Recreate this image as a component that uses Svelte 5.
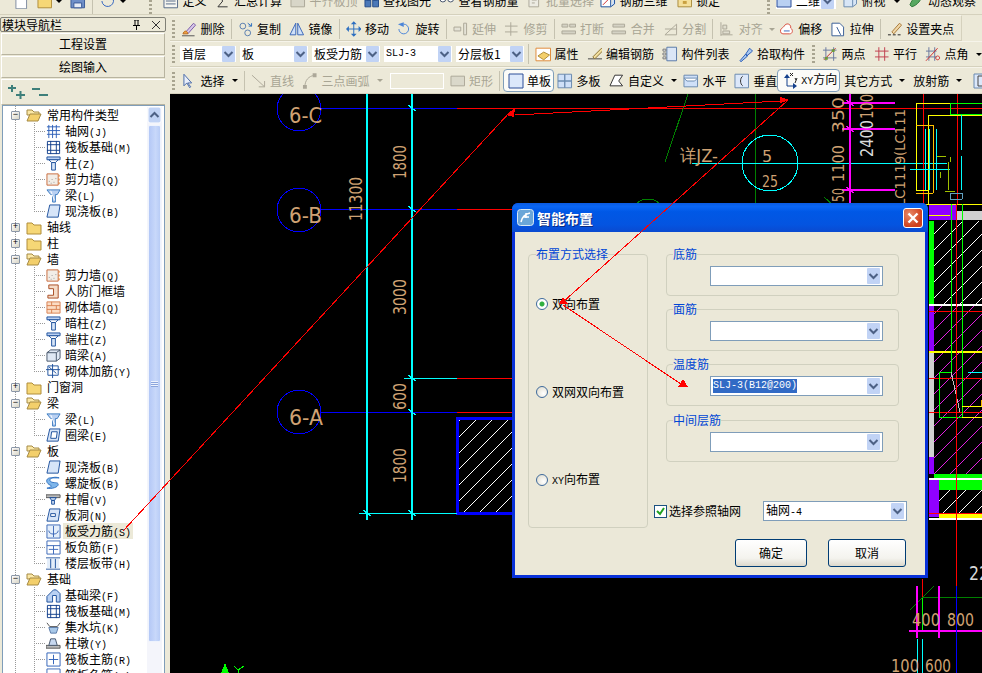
<script>
  const blue = '#1c4f9c';
  const sky = '#b9d0f2';
  const gray = '#aca899';
  const brick = '#c8693a';

  // each icon: list of [path, fill, stroke]
  const icons = {
    doc: [['M3 0h8l3 3v13H3z', '#fff', '#7f8ca0']],
    folder: [['M1 4h5l2 2h7v9H1z', '#f6d776', '#b08d3a']],
    folderOpen: [['M1 3h5l2 2h5v3H1z', '#fbe8a6', '#a58a45'], ['M1 14l3-7h11l-3 7z', '#f3cf6b', '#a58a45']],
    save: [['M1 1h14v14H1z', '#6f8fc8', '#3a5a98'], ['M4 1h8v5H4zM4 10h8v5H4z', '#e6ecf6', '#3a5a98']],
    undo: [['M3 8a6 6 0 1 0 4-6', 'none', '#2f62c0'], ['M1 3l6-2v6z', '#2f62c0', 'none']],
    def: [['M1 1h14v14H1z', '#f5f5f0', '#566a88'], ['M3 5h10M3 8h10M3 11h10', 'none', '#566a88']],
    sigma: [['M13 2H3l5 6-5 6h10', 'none', '#333']],
    flat: [['M1 5h14v9H1z', '#d8d6c8', gray], ['M3 1h10v4H3z', '#e6e4d8', gray]],
    find: [['M1 7h6v7H1zM9 7h6v7H9z', '#4a78b8', '#234a88'], ['M3 2h3v5H3zM10 2h3v5h-3z', '#8fb0dc', '#234a88']],
    glasses: [['M1 6a3 3 0 1 0 6 0a3 3 0 1 0-6 0M9 6a3 3 0 1 0 6 0a3 3 0 1 0-6 0M7 6h2', '#fff', '#44546a']],
    batch: [['M2 1h10v13H2z', '#ecebe2', gray], ['M5 4h5M5 7h5M5 10h3', 'none', gray]],
    cube: [['M1 4h10v10H1z', '#fff', blue], ['M1 4l4-3h10l-4 3M11 14l4-3V1', '#cfe0f8', blue], ['M3 12l6-6', 'none', '#d03030']],
    lock: [['M1 5h14v9H1z', '#f4df9a', '#a88b3c'], ['M6 8h4v3H6z', '#c8a040', 'none']],
    view: [['M2 4l4-3h9v10l-4 3H2z', '#d8e6f6', '#6a8ab0'], ['M2 4h9v10M11 4l4-3', 'none', '#6a8ab0']],
    orbit: [['M2 12c3-8 8-10 12-10c0 5-4 10-10 12z', '#58a860', '#2f7a3a'], ['M10 3l4-2v4z', '#e08a3a', 'none']],
    erase: [['M1 15h13', 'none', '#555'], ['M5 11l8-9 2 2-8 9z', '#d8c8e8', '#7a5aa8'], ['M3 11c2-2 4 0 4 2H2z', '#f0a040', '#b86a20']],
    copy: [['M2 5a3 3 0 1 0 6 0a3 3 0 1 0-6 0M7 12a3 3 0 1 0 6 0a3 3 0 1 0-6 0', 'none', '#5b7fb0'], ['M10 2l4 3M14 2v3h-3', 'none', '#2d6fc0']],
    mirror: [['M7 2L1 14h6zM9 2l6 12H9z', '#cfe0f8', '#3a66b8']],
    move: [['M8 1v14M1 8h14', 'none', '#2d6fc0'], ['M8 0l3 3H5zM8 16l3-3H5zM0 8l3-3v6zM16 8l-3-3v6z', '#2d6fc0', 'none']],
    rotate: [['M3 8a5 5 0 1 0 5-5', 'none', '#4b85d8'], ['M2 3l6-2v5z', '#4b85d8', 'none']],
    extend: [['M1 6h7v4H1zM11 2h3v12h-3z', '#e4e2d6', gray]],
    trim: [['M1 5h13M1 11h13M7 1v14', 'none', gray]],
    breakI: [['M1 3h6v3H1zM9 3h6v3H9zM1 10h14v3H1z', '#d4d2c4', gray]],
    merge: [['M2 3h12v3H2zM1 10h14v3H1z', '#d4d2c4', gray]],
    split: [['M2 14L14 3M2 14h12V3M2 8h12', 'none', gray]],
    align: [['M2 1v14M2 14h12', 'none', gray], ['M4 4h4v4H4zM4 10h7v3H4z', '#e0decf', gray]],
    offset: [['M2 12c-2-5 3-5 4-8c3-3 7 0 6 3c3 2 2 6-1 6H4z', '#fff', '#d85040'], ['M5 10h6', 'none', '#3a66b8']],
    stretch: [['M2 2h8l4 4v9H2z', '#fff', '#3a5f98'], ['M7 6l4 8', 'none', '#3a5f98']],
    grip: [['M1 14h3M6 14h3M11 14h3', 'none', '#222'], ['M5 11l8-9 2 2-8 9z', '#f0d8a8', '#a87838']],
    prop: [['M1 2h15v13H1z', '#fff', '#e08a3a'], ['M3 10l6-4 6 3-6 5z', '#f3cf6b', '#b08d3a']],
    edit: [['M1 13h17', 'none', '#444'], ['M6 11L15 2l2 2-9 9z', '#f3e0a0', '#8a7030']],
    list: [['M5 1h10v14H5z', '#dbe6f6', '#5a7aa8'], ['M1 3h3v2H1zM1 7h3v2H1zM1 11h3v2H1z', '#fff', '#777']],
    pick: [['M2 15l6-7 2 2-7 6zM8 8l4-6 3 3-6 5z', '#a8c8f0', '#2d5fb8']],
    twoPts: [['M1 4h14M1 12h14M4 1v14M12 1v14', 'none', '#6a7aa0'], ['M2 14L14 2', 'none', '#c03030'], ['M3 11h3v3H3zM10 3h3v3h-3z', '#6f9a3a', 'none']],
    parallel: [['M1 5h14M1 11h14M5 1v14M11 1v14', 'none', '#c04050']],
    angle: [['M1 5h11M1 11h11M4 1v14M10 1v14', 'none', '#6a7aa0'], ['M1 15L13 2', 'none', '#d03030'], ['M13 10a2 2 0 1 0 .1 0', 'none', '#d03030']],
    cursor: [['M3 1v12l3-3 3 5 1-1-3-4h4z', '#e8eefa', '#4a6aa8']],
    lineI: [['M1 2l13 12M14 8v6H8', 'none', gray]],
    arc: [['M3 14C3 7 7 3 13 2', 'none', gray], ['M1 12h4v4H1zM11 0h4v4h-4z', gray, 'none']],
    rect: [['M1 3h14v10H1z', '#dad8ca', gray]],
    single: [['M1 1h14v14H1z', '#dce8fa', '#2d4f98']],
    multi: [['M1 1h7v7H1zM8 1h7v7H8zM1 8h7v7H1zM8 8h7v7H8z', '#cfe0f8', '#6a8ab0']],
    custom: [['M1 13L6 2h8l-4 6 4 5z', '#fff', '#333']],
    horiz: [['M1 2h14v12H1z', '#cfe0f8', '#6a8ab0'], ['M1 5h14l-3 3H4z', '#fff', '#6a8ab0']],
    vert: [['M1 1h14v14H1z', '#dce8fa', '#6a8ab0'], ['M9 3C6 5 6 11 9 13', 'none', '#333']],
    xy: [['M5 4v9h7', 'none', '#14408c'], ['M5 1l3 4H2zM15 13l-4-3v6z', '#14408c', 'none'], ['M8 0l3 3M11 0L8 3M13 5l1 2M15 5l-2 5', 'none', '#222']],
    radial: [['M1 1h14v14H1z', '#dce8fa', '#6a8ab0'], ['M5 3v10M5 3h4M5 13h4', 'none', '#444']],
    wall: [['M1 2h12v12H1z', '#f2ede6', brick], ['M3 10h1M6 8h1M8 11h1M10 7h1M5 12h1', 'none', '#999'], ['M14 3v2M14 7v2M14 11v2', 'none', '#e07820']],
    col: [['M1 1h14v3H1z', sky, blue], ['M3 4h10l-3 3H6z', '#fff', blue], ['M6 7h4v8H6z', '#d7e5f8', blue]],
    beam: [['M1 2h14l-3 5h-2v8H7V7H5z', sky, '#3a7ac0'], ['M5 3l4 10', 'none', '#fff']],
    slab: [['M4 1h11l-2 13H1z', '#d7e5f8', blue]],
    door: [['M3 1h10v14H2v-3h6V5H3z', '#f5dcc8', '#a84a20']],
    brick: [['M1 2h14v12H1z', '#fbdcc4', '#d88050'], ['M1 6h14M1 10h14M6 2v4M11 6v4M6 10v4', 'none', '#d88050']],
    darkBeam: [['M1 5l4-3h10v9l-4 3H1z', '#dfe8f4', '#44546a'], ['M1 5h10v9M11 5l4-3', 'none', '#44546a']],
    rebar: [['M2 2h11v10H2z', '#fff', blue], ['M0 6h15M7 0v15M3 3l8 7', 'none', blue]],
    ring: [['M4 1h11l-2 13H1z', '#d7e5f8', blue], ['M6 4h6l-1 7H5z', '#fff', blue]],
    spiral: [['M14 2C8 0 2 3 5 6c3 2 8 0 8 3s-7 5-12 4c4-1 6-2 4-3C0 8-1 3 4 2z', '#7fb6ea', '#2d6fc0']],
    cap: [['M0 3h15v3H0z', '#bbb', '#555'], ['M4 6h7l-2 3H6zM6 9h3v4H6z', '#c7d8f0', blue]],
    hole: [['M4 1h11l-2 13H1z', '#d7e5f8', blue], ['M5 6h5v3H5z', '#fff', blue]],
    force: [['M1 1h14v14H1z', '#e4eefa', '#3a66b8'], ['M8 2v12M3 7c0 5 10 5 10 0', 'none', '#3a66b8']],
    neg: [['M1 1h14v14H1z', '#fff', '#3a66b8'], ['M1 6h14M8 6v9M3 10h10', 'none', '#3a66b8']],
    band: [['M0 2h15M0 14h15', 'none', blue], ['M1 3h13v10H1z', '#e4eefa', 'none'], ['M5 3v10M10 3v10', 'none', blue]],
    fbeam: [['M1 15V9l7-7h3l4 4v9h-4V8H7v7z', sky, blue]],
    raft: [['M1.5 1.5h13v13h-13z', '#fff', '#123f8c'], ['M1 5h14M1 11h14M5 1v14M11 1v14', 'none', '#123f8c']],
    axisnet: [['M1 3h14M1 7h14M1 11h14M3 1v14M7 1v14M11 1v14', 'none', '#2d5fb8']],
    pit: [['M1 3l3 4h8l3-4', 'none', '#555'], ['M3 8h10l-2 6H5z', '#a8c8e8', '#5a7aa8']],
    pier: [['M0 10h15v3H0z', '#bbb', '#555'], ['M5 3h5l2 7H3z', '#c7d8f0', '#44546a']],
    main: [['M1 1h14v14H1z', '#fff', '#2d5fb8'], ['M8 3v10M3 8h10', 'none', '#2d5fb8']]
  };

  const top = [
    { space: 9 }, { icon: 'doc' }, { icon: 'folder' }, { caret: 1 }, { space: 4 }, { icon: 'save' },
    { sep: 1 }, { icon: 'undo' }, { space: 2 }, { caret: 1 }, { space: 23 }, { grip: 1 }, { space: 7 },
    { icon: 'def', label: '定义' }, { icon: 'sigma', label: '汇总计算' },
    { icon: 'flat', label: '平齐板顶', off: 1 }, { icon: 'find', label: '查找图元', nudge: -2 },
    { icon: 'glasses', label: '查看钢筋量' }, { icon: 'batch', label: '批量选择', off: 1 },
    { icon: 'cube', label: '钢筋三维', nudge: -2 }, { icon: 'lock', label: '锁定', nudge: 1 }
  ];

  const edit = [
    { icon: 'erase', label: '删除' }, { sep: 1 },
    { icon: 'copy', label: '复制' }, { icon: 'mirror', label: '镜像' }, { sep: 1 },
    { icon: 'move', label: '移动' }, { icon: 'rotate', label: '旋转', nudge: -1 }, { sep: 1 },
    { icon: 'extend', label: '延伸', off: 1 }, { icon: 'trim', label: '修剪', off: 1 }, { sep: 1 },
    { icon: 'breakI', label: '打断', off: 1 }, { icon: 'merge', label: '合并', off: 1, nudge: -1 }, { icon: 'split', label: '分割', off: 1 }, { sep: 1 },
    { icon: 'align', label: '对齐', off: 1, caret: 1 },
    { icon: 'offset', label: '偏移' }, { icon: 'stretch', label: '拉伸' }, { sep: 1 },
    { icon: 'grip', label: '设置夹点' }
  ];

  const props = [
    { icon: 'prop', label: '属性' }, { icon: 'edit', label: '编辑钢筋' },
    { icon: 'list', label: '构件列表' }, { icon: 'pick', label: '拾取构件' }, { grip: 1 },
    { icon: 'twoPts', label: '两点' }, { icon: 'parallel', label: '平行' }, { icon: 'angle', label: '点角', caret: 1 }
  ];

  const drawA = [
    { icon: 'cursor', label: '选择', caret: 1 }, { sep: 1 },
    { icon: 'lineI', label: '直线', off: 1 }, { icon: 'arc', label: '三点画弧', off: 1, caret: 1 }
  ];

  const drawB = [
    { icon: 'multi', label: '多板' }, { icon: 'custom', label: '自定义', caret: 1 },
    { icon: 'horiz', label: '水平', nudge: -2 }, { icon: 'vert', label: '垂直', nudge: -1 }
  ];

  const combos = [
    { text: '首层', w: 56 }, { text: '板', w: 68 }, { text: '板受力筋', w: 68 },
    { text: 'SLJ-3', w: 68, lat: 1 }, { text: '分层板1', w: 68 }
  ];

  const tree = [
    { folder: '常用构件类型', open: 1, kids: [['axisnet', '轴网', 'J'], ['raft', '筏板基础', 'M'], ['col', '柱', 'Z'], ['wall', '剪力墙', 'Q'], ['beam', '梁', 'L'], ['slab', '现浇板', 'B']] },
    { folder: '轴线' },
    { folder: '柱' },
    { folder: '墙', open: 1, kids: [['wall', '剪力墙', 'Q'], ['door', '人防门框墙', ''], ['brick', '砌体墙', 'Q'], ['col', '暗柱', 'Z'], ['col', '端柱', 'Z'], ['darkBeam', '暗梁', 'A'], ['rebar', '砌体加筋', 'Y']] },
    { folder: '门窗洞' },
    { folder: '梁', open: 1, kids: [['beam', '梁', 'L'], ['ring', '圈梁', 'E']] },
    { folder: '板', open: 1, kids: [['slab', '现浇板', 'B'], ['spiral', '螺旋板', 'B'], ['cap', '柱帽', 'V'], ['hole', '板洞', 'N'], ['force', '板受力筋', 'S', 1], ['neg', '板负筋', 'F'], ['band', '楼层板带', 'H']] },
    { folder: '基础', open: 1, kids: [['fbeam', '基础梁', 'F'], ['raft', '筏板基础', 'M'], ['pit', '集水坑', 'K'], ['pier', '柱墩', 'Y'], ['main', '筏板主筋', 'R'], ['neg', '筏板负筋', 'X']] }
  ];

  const bars = [
    { label: '底筋', value: '' },
    { label: '面筋', value: '' },
    { label: '温度筋', value: 'SLJ-3(B12@200)' },
    { label: '中间层筋', value: '' }
  ];

  const modes = [
    { cjk: '双向布置', on: true },
    { cjk: '双网双向布置' },
    { lat: 'XY', cjk: '向布置' }
  ];

  const C = '#00ffff', R = '#ff0000', G = '#00ff00', DG = '#008000', M = '#ff00ff', Y = '#ffff00', BL = '#0000ff', P = '#9000ff', W = '#ffffff', O = '#ffc000';
  const lines = [
    [321, 108, 457, 108, BL], [321, 209, 457, 209, BL], [321, 412, 457, 412, BL],
    [457, 108, 982, 108, R], [457, 209, 515, 209, R], [457, 378, 515, 378, R], [457, 412, 515, 412, R],
    [404, 378, 457, 378, C], [359, 513, 457, 513, C],
    [367, 94, 367, 520, C, 2], [412, 94, 412, 520, C, 2],
    [408, 105, 416, 111, C], [408, 206, 416, 212, C], [408, 375, 416, 381, C], [408, 409, 416, 415, C], [408, 510, 416, 516, C], [363, 510, 371, 516, C],
    [688, 94, 665, 162, DG], [755, 94, 755, 205, DG], [824, 197, 833, 205, DG],
    [692, 163, 947, 163, C],
    [850, 94, 850, 205, M, 2], [842, 103, 895, 103, M, 2], [842, 129, 895, 129, M, 2], [842, 190, 895, 190, M, 2], [846, 100, 854, 106, M], [846, 126, 854, 132, M], [846, 187, 854, 193, M],
    [923, 94, 923, 205, R], [957, 94, 957, 205, R],
    [916, 103, 916, 190, Y], [916, 103, 982, 103, Y], [928, 115, 928, 204, Y], [928, 115, 982, 115, Y], [916, 190, 928, 190, Y],
    [950, 103, 950, 115, G], [950, 103, 982, 103, G], [950, 114, 982, 114, G],
    [916, 125, 933, 125, O], [933, 125, 933, 193, O], [916, 193, 933, 193, O],
    [925, 129, 925, 190, C], [929, 129, 929, 190, C], [936, 129, 936, 190, C], [961, 115, 961, 150, C], [961, 156, 961, 190, C], [910, 169, 950, 169, C],
    [937, 156, 946, 156, '#a0c000'], [950, 157, 950, 162, '#a0c000'], [940, 172, 940, 178, '#a0c000'], [948, 162, 948, 190, '#a0c000'], [945, 191, 955, 191, '#a0c000'],
    [950, 193, 962, 193, '#60a0c0'], [950, 199, 962, 199, '#60a0c0'], [950, 193, 950, 199, '#60a0c0'], [962, 193, 962, 199, '#60a0c0'],
    [922, 579, 922, 597, R], [922, 597, 922, 631, G], [922, 597, 982, 597, DG], [910, 610, 934, 586, DG],
    [917, 586, 917, 638, M, 2], [939, 586, 939, 638, M, 2], [909, 631, 982, 631, M, 2],
    [917, 639, 917, 673, C], [922, 639, 922, 673, C], [956, 586, 956, 673, BL],
    [924, 204, 982, 204, Y], [929, 215, 950, 215, Y],
    [238, 673, 238, 670, G], [238, 670, 234, 666, G], [238, 670, 244, 666, G]
  ];

  // right of the dialog
  const fills = [
    [929, 205, 28, 15, P], [957, 211, 25, 9, '#d0d0d0'],
    [929, 221, 5, 83, G], [929, 306, 5, 45, P], [929, 353, 5, 104, '#d0d0d0'], [929, 457, 5, 17, P],
    [934, 474, 48, 4, G], [929, 304, 53, 2, W], [929, 351, 53, 2, Y], [929, 478, 53, 2, W],
    [929, 480, 10, 37, P], [939, 480, 43, 10, G], [939, 514, 43, 4, Y], [929, 518, 53, 2, W]
  ];
  const linesRight = [
    [929, 311, 982, 311, R], [929, 378, 982, 378, R], [929, 412, 982, 412, R], [929, 513, 982, 513, R],
    [951, 204, 951, 372, G], [962, 204, 962, 417, G], [939, 372, 951, 372, G], [939, 372, 939, 417, G], [939, 417, 962, 417, G],
    [951, 372, 960, 412, '#c0c0c0'], [962, 406, 982, 406, Y], [962, 417, 982, 417, Y], [981, 400, 981, 406, O], [968, 372, 982, 372, C],
    [956, 204, 956, 586, R]
  ];

  const texts = [
    { t: '6-C', x: 289, y: 123, len: 33 }, { t: '6-B', x: 289, y: 223, len: 33 }, { t: '6-A', x: 289, y: 425, len: 34 },
    { t: '详JZ-', x: 680, y: 162, len: 38, s: 18 }, { t: '5', x: 762, y: 162, s: 16 }, { t: '25', x: 762, y: 187, len: 16, s: 16 },
    { t: '400', x: 912, y: 626, len: 28, s: 17 }, { t: '800', x: 947, y: 626, len: 27, s: 17 },
    { t: '100', x: 891, y: 672, len: 28, s: 17 }, { t: '600', x: 925, y: 672, len: 26, s: 17 },
    { t: '22', x: 969, y: 580, len: 20, s: 20, c: '#d8d8d8' }
  ];
  // rotated dimension labels: bottom centre of the baseline
  const vtexts = [
    { t: '1800', x: 406, y: 179, len: 34 }, { t: '11300', x: 362, y: 221, len: 44 },
    { t: '3000', x: 406, y: 315, len: 36 }, { t: '600', x: 406, y: 410, len: 27 }, { t: '1800', x: 406, y: 483, len: 35 },
    { t: '350', x: 844, y: 133, len: 36, s: 15 }, { t: '1100', x: 844, y: 182, len: 37, s: 15 }, { t: '50', x: 844, y: 202, len: 14, s: 15 },
    { t: '2400', x: 873, y: 157, len: 37, c: '#d8d8d8' }, { t: '100', x: 873, y: 119, len: 25 },
    { t: 'LC1119(LC111', x: 905, y: 206, len: 97, s: 14 }
  ];
</script>

{#snippet icon(name, size = 16)}
  <svg class="icon" width={size} height={size} viewBox="0 0 16 16">
    {#each icons[name] as [d, fill, stroke]}
      <path {d} {fill} {stroke} />
    {/each}
  </svg>
{/snippet}

{#snippet tool(it)}
  {#if it.sep}
    <i class="sep"></i>
  {:else if it.grip}
    <i class="grip"></i>
  {:else if it.space}
    <i style="width: {it.space}px"></i>
  {:else if it.caret && !it.label}
    <i class="caret solo"></i>
  {:else}
    <span class="tool" class:off={it.off} style="margin-left: {it.nudge || 0}px">
      {@render icon(it.icon)}
      {#if it.label}<span class="txt">{it.label}</span>{/if}
      {#if it.caret}<i class="caret"></i>{/if}
    </span>
  {/if}
{/snippet}

{#snippet arrow()}
  <svg width="15" height="16" viewBox="0 0 15 16" class="arrow">
    <rect width="13" height="16" x="1" rx="1" fill="#c1d3f5" />
    <path d="M3.5 6l4 4 4-4" fill="none" stroke="#4d6185" stroke-width="2" />
  </svg>
{/snippet}

<div class="app">
  <div class="topbar">
    {#each top as it}{@render tool(it)}{/each}
    <span class="fill"></span>
    <i class="grip"></i>
    <span class="viewcombo">
      <svg class="icon" width="16" height="14" viewBox="0 0 16 14"><path d="M1 0h14v13H1z" fill="#b9d0f2" stroke="#2d4f98" /></svg>
      <span class="txt">二维</span>
      {@render arrow()}
    </span>
    <span class="tool">{@render icon('view')}<span class="txt">俯视</span><i class="caret"></i></span>
    <span class="tool">{@render icon('orbit')}<span class="txt">动态观察</span></span>
  </div>

  <div class="work">
    <aside class="nav">
      <div class="navtitle">
        <span>模块导航栏</span>
        <span class="navctl">
          <svg width="9" height="10" viewBox="0 0 9 10"><path d="M2 0h5M3 0v5M6 0v5M1 5.500h7M4.500 6v4" fill="none" stroke="#000" /></svg>
          <svg width="8" height="8" viewBox="0 0 8 8"><path d="M0 0l8 8M8 0L0 8" stroke="#333" /></svg>
        </span>
      </div>
      <button class="navbtn">工程设置</button>
      <button class="navbtn">绘图输入</button>
      <div class="navtools">
        <svg width="17" height="14" viewBox="0 0 17 14"><path d="M0 3h8M4 0v7M8 10h9M12.500 6v8" fill="none" stroke="#3e7f7a" stroke-width="2" /></svg>
        <svg width="16" height="8" viewBox="0 0 16 8"><path d="M0 1h8M7 7h9" fill="none" stroke="#3e7f7a" stroke-width="2" /></svg>
      </div>
      <div class="treebox">
        <div class="tree">
          {#each tree as f}
            <div class="row">
              <span class="exp">{f.open ? '−' : '+'}</span>
              {@render icon(f.open ? 'folderOpen' : 'folder')}
              <span class="fname">{f.folder}</span>
            </div>
            {#if f.kids}
              {#each f.kids as [ic, name, key, sel], i}
                <div class="row kid">
                  <span class="branch" class:last={i === f.kids.length - 1}></span>
                  {@render icon(ic, 15)}
                  <span class="kname" class:sel>{name}{#if key}<span class="lat"> ({key})</span>{/if}</span>
                </div>
              {/each}
            {/if}
          {/each}
        </div>
        <div class="scroll">
          <svg width="15" height="16" viewBox="0 0 15 16"><rect x="1" width="13" height="16" rx="2" fill="#c1d3f5" stroke="#fff" /><path d="M3.500 10l4-4 4 4" fill="none" stroke="#4d6185" stroke-width="2" /></svg>
          <div class="thumb"><i></i></div>
        </div>
      </div>
    </aside>

    <div class="main">
      <div class="bar edit">
        <i class="grip"></i>
        {#each edit as it}{@render tool(it)}{/each}
      </div>
      <div class="bar props">
        <i class="grip"></i>
        <div class="combos">
          {#each combos as c}
            <span class="combo" style="width: {c.w}px"><span class:lat={c.lat}>{c.text}</span>{@render arrow()}</span>
          {/each}
        </div>
        <i class="sep"></i>
        {#each props as it}{@render tool(it)}{/each}
      </div>
      <div class="bar draw">
        <i class="grip"></i>
        {#each drawA as it}{@render tool(it)}{/each}
        <span class="combo dead"></span>
        {@render tool({ icon: 'rect', label: '矩形', off: 1 })}
        <i class="sep"></i>
        <span class="toggle">{@render icon('single')}<span class="txt">单板</span></span>
        {#each drawB as it}{@render tool(it)}{/each}
        <span class="toggle xydir">{@render icon('xy')}<span class="txt"><span class="lat">XY</span>方向</span></span>
        <span class="tool"><span class="txt">其它方式</span><i class="caret"></i></span>
        <span class="tool"><span class="txt">放射筋</span><i class="caret"></i></span>
        <span class="tail">{@render icon('radial')}</span>
      </div>

      <svg class="cad" viewBox="170 94 812 579" width="812" height="579" shape-rendering="crispEdges">
        <defs>
          <pattern id="hw" width="16" height="16" patternUnits="userSpaceOnUse"><path d="M0 16L16 0" stroke="#fff" /></pattern>
          <pattern id="hm" width="16" height="16" patternUnits="userSpaceOnUse"><path d="M0 16L16 0" stroke="#e020e0" /></pattern>
        </defs>
        <rect x="170" y="94" width="812" height="579" fill="#000" />
        <rect x="458" y="419" width="60" height="93" fill="url(#hw)" />
        <rect x="457.500" y="418" width="60" height="95" fill="none" stroke={BL} stroke-width="3" />
        <rect x="934" y="221" width="48" height="83" fill="url(#hw)" />
        <rect x="934" y="306" width="48" height="168" fill="url(#hm)" />
        <rect x="939" y="490" width="43" height="24" fill="url(#hw)" />
        {#each fills as [x, y, width, height, fill]}
          <rect {x} {y} {width} {height} {fill} />
        {/each}
        {#each [...lines, ...linesRight] as [x1, y1, x2, y2, stroke, w]}
          <line {x1} {y1} {x2} {y2} {stroke} stroke-width={w || 1} />
        {/each}
        <circle cx="299" cy="109" r="22" fill="none" stroke={BL} />
        <circle cx="299" cy="210" r="22" fill="none" stroke={BL} />
        <circle cx="299" cy="412" r="22" fill="none" stroke={BL} />
        <circle cx="770" cy="163" r="28" fill="none" stroke={C} />
        <circle cx="648" cy="216" r="17" fill="none" stroke={DG} />
        <path d="M225 663l4 10h-8z" fill="#00ff00" />
        {#each texts as t}
          <text class="dim" x={t.x} y={t.y} font-size={t.s || 21} fill={t.c || '#cfa273'} textLength={t.len} lengthAdjust="spacingAndGlyphs">{t.t}</text>
        {/each}
        {#each vtexts as t}
          <text class="dim" transform="translate({t.x} {t.y}) rotate(-90)" font-size={t.s || 17} fill={t.c || '#cfa273'} textLength={t.len} lengthAdjust="spacingAndGlyphs">{t.t}</text>
        {/each}
      </svg>
    </div>
  </div>

  <div class="dialog">
    <div class="title">
      <svg width="17" height="17" viewBox="0 0 17 17"><rect x=".5" y=".5" width="16" height="16" rx="3" fill="#6aa6d8" stroke="#d8e8f4" /><path d="M4 13c1-5 4-8 9-9M6 8h6M9 4v5" fill="none" stroke="#fff" stroke-width="1.500" /></svg>
      <b>智能布置</b>
      <span class="close">
        <svg width="12" height="12" viewBox="0 0 12 12"><path d="M1.500 1.500l9 9M10.500 1.500l-9 9" stroke="#fff" stroke-width="2.400" /></svg>
      </span>
    </div>
    <div class="body">
      <div class="cols">
        <fieldset class="modes">
          <legend>布置方式选择</legend>
          {#each modes as m}
            <label class="radio">
              <i class:on={m.on}></i>
              <span>{#if m.lat}<span class="lat">{m.lat}</span>{/if}{m.cjk}</span>
            </label>
          {/each}
        </fieldset>
        <div class="right">
          {#each bars as b}
            <fieldset class="rebar">
              <legend>{b.label}</legend>
              <span class="field">
                {#if b.value}<span class="lat hl">{b.value}</span>{/if}
                {@render arrow()}
              </span>
            </fieldset>
          {/each}
          <div class="axis">
            <span class="check">
              <svg width="9" height="9" viewBox="0 0 9 9"><path d="M1 4l3 3 4-6" fill="none" stroke="#21a121" stroke-width="2" /></svg>
            </span>
            <span>选择参照轴网</span>
            <span class="field wide">
              <span>轴网<span class="lat">-4</span></span>
              {@render arrow()}
            </span>
          </div>
        </div>
      </div>
      <div class="actions">
        <button class="ok">确定</button>
        <button class="cancel">取消</button>
      </div>
    </div>
  </div>

  <svg class="marks" viewBox="0 0 982 673" width="982" height="673" shape-rendering="crispEdges">
    <path d="M123 531L510 112M515 115L781 101M787 101L563 302M563 305L681 384" fill="none" stroke="#ff0000" />
    <path d="M515 108l-1 9-8-2zM789 100l-9 3 0-6zM563 297l5 7-9 0zM688 387l-10 0 5-8z" fill="#ff0000" />
  </svg>
</div>

<style>
  :global(body) {
    margin: 0;
    background: #ece9d8;
  }

  .app {
    position: relative;
    width: 982px;
    height: 673px;
    overflow: hidden;
    background: #ece9d8;
    color: #000;
    font: 12px/16px "Noto Sans CJK SC", "Liberation Sans", sans-serif;
  }

  i {
    display: block;
    flex: none;
  }

  .lat {
    font: 10px/16px "Liberation Mono", monospace;
  }

  .icon {
    display: block;
    flex: none;
  }

  .topbar {
    display: flex;
    align-items: flex-start;
    height: 14px;
    padding: 0 2px 0 0;
    overflow: hidden;
    white-space: nowrap;
    border-bottom: 1px solid #d5d1bd;
  }

  .topbar > * {
    margin-top: -7px;
  }

  .topbar .fill {
    flex: 1;
  }

  .topbar .tool .caret {
    margin-left: 5px;
  }

  .topbar > .caret.solo {
    margin: 0;
  }

  .topbar .sep,
  .topbar .grip {
    margin-top: 0;
  }

  .viewcombo {
    flex: none;
    display: flex;
    align-items: center;
    gap: 4px;
    width: 60px;
    margin-left: 6px;
    margin-right: 2px;
    background: #fff;
  }

  .viewcombo .arrow {
    margin-left: -4px;
  }

  .work {
    display: flex;
    height: 658px;
  }

  .nav {
    flex: none;
    display: flex;
    flex-direction: column;
    width: 166px;
    margin-right: 4px;
    padding-top: 2px;
    box-sizing: border-box;
  }

  .navtitle {
    display: flex;
    align-items: center;
    justify-content: space-between;
    height: 13px;
    padding: 0 5px 0 1px;
    border: 1px solid #808076;
    border-radius: 2px;
  }

  .navctl {
    display: flex;
    align-items: center;
    gap: 11px;
  }

  .navbtn {
    display: block;
    width: 164px;
    height: 22px;
    margin: 1px 1px 0;
    padding: 0;
    border: 0;
    border-top: 1px solid #fff;
    border-left: 1px solid #fff;
    border-bottom: 1px solid #b8b4a0;
    border-right: 1px solid #b8b4a0;
    background: #ece9d8;
    font: inherit;
    text-align: center;
  }

  .navtools {
    display: flex;
    align-items: center;
    gap: 7px;
    height: 24px;
    margin: 1px 1px 0;
    padding-left: 6px;
    border-top: 1px solid #fff;
    border-left: 1px solid #fff;
    border-bottom: 1px solid #b8b4a0;
  }

  .treebox {
    flex: 1;
    display: flex;
    min-height: 0;
    margin: 0 1px 0 2px;
    border: 1px solid #7f9db9;
    border-bottom: 0;
    background: #fff;
    overflow: hidden;
  }

  .tree {
    flex: 1;
    min-width: 0;
    padding-top: 1px;
    background: repeating-linear-gradient(to bottom, #999 0 1px, transparent 1px 2px) 12px 0 / 1px 100% no-repeat;
  }

  .row {
    display: flex;
    align-items: center;
    height: 16px;
    padding-left: 8px;
    white-space: nowrap;
  }

  .exp {
    flex: none;
    width: 9px;
    height: 9px;
    margin-right: 6px;
    border: 1px solid #8b97a8;
    border-radius: 1px;
    box-sizing: border-box;
    background: linear-gradient(135deg, #fff, #d8d4c4);
    color: #000;
    font: 9px/7px "Liberation Mono", monospace;
    text-align: center;
  }

  .fname {
    margin-left: 5px;
  }

  .kid {
    padding-left: 31px;
  }

  .branch {
    flex: none;
    align-self: stretch;
    width: 12px;
    background:
      repeating-linear-gradient(to bottom, #999 0 1px, transparent 1px 2px) 0 0 / 1px 100% no-repeat,
      repeating-linear-gradient(to right, #999 0 1px, transparent 1px 2px) 0 8px / 100% 1px no-repeat;
  }

  .branch.last {
    background:
      repeating-linear-gradient(to bottom, #999 0 1px, transparent 1px 2px) 0 0 / 1px 9px no-repeat,
      repeating-linear-gradient(to right, #999 0 1px, transparent 1px 2px) 0 8px / 100% 1px no-repeat;
  }

  .kname {
    height: 16px;
    margin-left: 2px;
    padding: 0 2px;
  }

  .kname.sel {
    background: #ece9d8;
  }

  .scroll {
    flex: none;
    width: 15px;
    margin: 1px 2px 0 0;
    background: #f4f5fb;
  }

  .scroll svg {
    display: block;
  }

  .thumb {
    display: flex;
    align-items: center;
    justify-content: center;
    height: 517px;
    margin: 2px 1px 0;
    border: 1px solid #eef3fd;
    border-radius: 2px;
    box-sizing: border-box;
    background: linear-gradient(to right, #b4c8f6, #c8d8fa 60%, #b8ccf6);
  }

  .thumb i {
    width: 7px;
    height: 6px;
    background: repeating-linear-gradient(to bottom, #eef3fd 0 1px, #8ca5dc 1px 2px);
  }

  .main {
    flex: 1;
    min-width: 0;
    display: flex;
    flex-direction: column;
  }

  .bar {
    flex: none;
    display: flex;
    align-items: center;
    white-space: nowrap;
    border-top: 1px solid #f6f4ea;
    border-bottom: 1px solid #d5d1bd;
    box-sizing: border-box;
  }

  .bar > .grip {
    margin: 0 2px;
  }

  .bar > .tool + .grip {
    margin: 0 3px;
  }

  .edit {
    height: 26px;
    width: 792px;
    padding-top: 2px;
    border-right: 1px solid #d5d1bd;
  }

  .edit .caret {
    margin-left: 2px;
    margin-right: -4px;
  }

  .props {
    height: 26px;
  }

  .draw {
    height: 27px;
  }

  .grip {
    width: 3px;
    height: 18px;
    background: repeating-linear-gradient(to bottom, #a8a490 0 2px, transparent 2px 4px);
  }

  .sep {
    width: 1px;
    height: 20px;
    margin: 0 2px;
    background: #c5c2b0;
  }

  .tool {
    flex: none;
    display: flex;
    align-items: center;
    gap: 4px;
    padding: 0 4px;
  }

  .tool.off {
    color: #a8a594;
  }

  .tool .icon {
    width: 15.500px;
  }

  .caret {
    width: 0;
    height: 0;
    margin-left: 3px;
    border: 3px solid transparent;
    border-top: 3px solid #000;
    border-bottom: 0;
  }

  .off .caret {
    border-top-color: #a8a594;
  }

  .combos {
    display: flex;
    gap: 4px;
    margin-left: 3px;
    margin-right: 2px;
  }

  .combo {
    flex: none;
    display: flex;
    align-items: center;
    justify-content: space-between;
    height: 16px;
    padding-left: 2px;
    box-sizing: border-box;
    background: #fff;
    white-space: nowrap;
  }

  .combo.dead {
    width: 54px;
    margin: 0 2px 0 3px;
    border: 1px solid #fff;
    background: #ece9d8;
  }

  .toggle {
    flex: none;
    display: flex;
    align-items: center;
    gap: 3px;
    height: 21px;
    margin: 0 -1px 0 1px;
    padding: 0 2px 0 4px;
    border: 1px solid #7f9db9;
    border-radius: 4px;
    background: #fbfbf8;
  }

  .toggle.xydir {
    margin: 0 0 0 -4px;
  }

  .tail {
    margin-left: 7px;
  }

  .cad {
    display: block;
    flex: none;
  }

  .dim {
    font-family: "DejaVu Sans", sans-serif;
  }

  .dialog {
    position: absolute;
    left: 512px;
    top: 203px;
    width: 416px;
    height: 375px;
    box-sizing: border-box;
    display: flex;
    flex-direction: column;
    border-radius: 6px 6px 0 0;
    background: #0831d9;
  }

  .title {
    flex: none;
    display: flex;
    align-items: center;
    gap: 3px;
    height: 29px;
    padding: 0 5px;
    border-radius: 6px 6px 0 0;
    background: linear-gradient(to bottom, #0a5ae0, #0a66f4 12%, #0058e6 30%, #0454e0 75%, #0a4ad0);
    color: #fff;
  }

  .title b {
    font-size: 14px;
    text-shadow: 1px 1px 0 #0a2a80;
  }

  .close {
    display: flex;
    align-items: center;
    justify-content: center;
    width: 20px;
    height: 20px;
    margin-left: auto;
    box-sizing: border-box;
    border: 1px solid #fff;
    border-radius: 3px;
    background: radial-gradient(circle at 30% 30%, #e88a6a, #d0401c 70%);
  }

  .body {
    flex: 1;
    margin: 0 3px 3px;
    padding: 14px 19px 0 13px;
    background: #ebe8d8;
  }

  .cols {
    display: grid;
    grid-template-columns: 120px 253px;
    gap: 6px;
  }

  fieldset {
    margin: 0;
    min-width: 0;
    box-sizing: border-box;
    border: 1px solid #d0d0bf;
    border-radius: 4px;
  }

  legend {
    padding: 0;
    color: #0046d5;
    font-size: 12px;
    line-height: 16px;
  }

  .modes {
    height: 282px;
    padding: 0 7px;
  }

  .radio {
    display: flex;
    align-items: center;
    gap: 4px;
    height: 16px;
    margin-top: 72px;
  }

  .radio:first-of-type {
    margin-top: 34px;
  }

  .radio i {
    display: flex;
    width: 12px;
    height: 12px;
    box-sizing: border-box;
    border: 1px solid #3e6a9c;
    border-radius: 50%;
    background: radial-gradient(circle at 65% 65%, #fff, #dcd8c8);
  }

  .radio i.on {
    background: radial-gradient(circle, #30b040 0 2px, #fff 3px);
  }

  .right {
    display: flex;
    flex-direction: column;
    align-items: flex-start;
  }

  .rebar {
    width: 233px;
    height: 50px;
    margin: 0 0 5px 12px;
    padding: 0 6px;
  }

  .rebar:nth-child(4) {
    margin-top: 1px;
  }

  .field {
    display: flex;
    align-items: center;
    justify-content: flex-end;
    width: 173px;
    height: 20px;
    margin: 4px 0 0 37px;
    padding: 0 1px 0 2px;
    box-sizing: border-box;
    border: 1px solid #7f9db9;
    background: #fff;
  }

  .field .arrow {
    flex: none;
  }

  .hl {
    margin-right: auto;
    background: #316ac5;
    color: #fff;
    line-height: 14px;
  }

  .axis {
    display: flex;
    align-items: center;
    gap: 2px;
    width: 253px;
    margin-top: 34px;
  }

  .check {
    display: flex;
    align-items: center;
    justify-content: center;
    width: 13px;
    height: 13px;
    box-sizing: border-box;
    border: 1px solid #1c5180;
    background: #fff;
  }

  .field.wide {
    width: 144px;
    justify-content: space-between;
    margin: 0 0 0 auto;
  }

  .actions {
    display: flex;
    justify-content: flex-end;
    gap: 21px;
    margin-top: 11px;
  }

  .actions button {
    height: 28px;
    padding: 0;
    border: 1px solid #003c74;
    border-radius: 3px;
    background: linear-gradient(to bottom, #fff, #f4f3ee 70%, #dcd8cc);
    font: inherit;
  }

  .ok {
    width: 72px;
  }

  .cancel {
    width: 78px;
  }

  .marks {
    position: absolute;
    left: 0;
    top: 0;
    pointer-events: none;
  }
</style>
